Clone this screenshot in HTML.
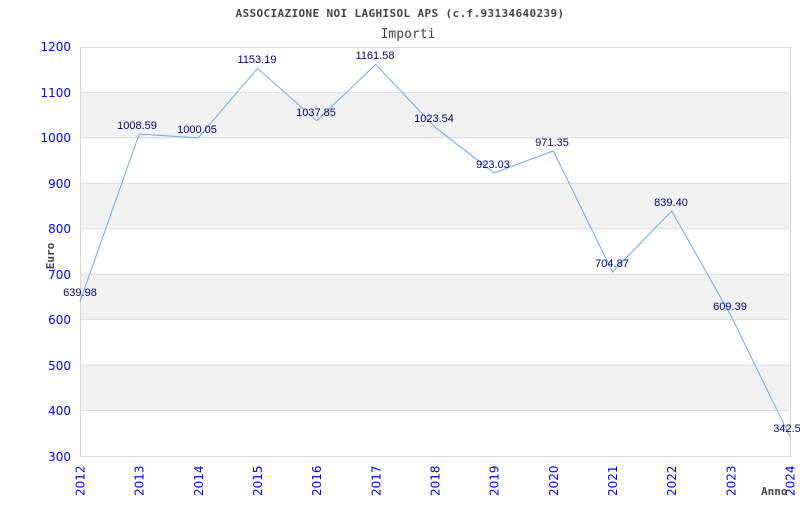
<!DOCTYPE html>
<html><head><style>body{margin:0;background:#fff}</style></head><body>
<svg width="800" height="500" xmlns="http://www.w3.org/2000/svg">
<rect width="800" height="500" fill="#fff"/>
<text x="400" y="17" text-anchor="middle" font-family="DejaVu Sans Mono, monospace" font-weight="bold" font-size="11" letter-spacing="0.38" fill="#444">ASSOCIAZIONE NOI LAGHISOL APS (c.f.93134640239)</text>
<text x="408" y="38" text-anchor="middle" font-family="DejaVu Sans Mono, monospace" font-size="13" fill="#444">Importi</text>
<g fill="#f2f2f2">
<rect x="80" y="92.4" width="710" height="45.4"/>
<rect x="80" y="183.3" width="710" height="45.4"/>
<rect x="80" y="274.2" width="710" height="45.4"/>
<rect x="80" y="365.1" width="710" height="45.4"/>
</g>
<g stroke="#ddd" stroke-width="1">
<line x1="80" y1="92.4" x2="790" y2="92.4"/><line x1="80" y1="137.8" x2="790" y2="137.8"/>
<line x1="80" y1="183.3" x2="790" y2="183.3"/><line x1="80" y1="228.7" x2="790" y2="228.7"/>
<line x1="80" y1="274.2" x2="790" y2="274.2"/><line x1="80" y1="319.6" x2="790" y2="319.6"/>
<line x1="80" y1="365.1" x2="790" y2="365.1"/><line x1="80" y1="410.5" x2="790" y2="410.5"/>
</g>
<rect x="80.5" y="47.5" width="710" height="409" fill="none" stroke="#d8d8d8"/>
<g font-family="DejaVu Sans, sans-serif" font-size="12" fill="#0000ff" text-anchor="end">
<text x="71" y="51">1200</text><text x="71" y="97">1100</text><text x="71" y="142">1000</text>
<text x="71" y="188">900</text><text x="71" y="233">800</text><text x="71" y="279">700</text>
<text x="71" y="324">600</text><text x="71" y="370">500</text><text x="71" y="415">400</text>
<text x="71" y="461">300</text>
</g>
<text transform="translate(54,256) rotate(-90)" text-anchor="middle" font-family="DejaVu Sans Mono, monospace" font-weight="bold" font-size="11" fill="#444">Euro</text>
<g font-family="DejaVu Sans, sans-serif" font-size="12" fill="#0000ff">
<text transform="translate(84.5,496) rotate(-90)">2012</text>
<text transform="translate(143.7,496) rotate(-90)">2013</text>
<text transform="translate(202.8,496) rotate(-90)">2014</text>
<text transform="translate(262,496) rotate(-90)">2015</text>
<text transform="translate(321.2,496) rotate(-90)">2016</text>
<text transform="translate(380.3,496) rotate(-90)">2017</text>
<text transform="translate(439.5,496) rotate(-90)">2018</text>
<text transform="translate(498.7,496) rotate(-90)">2019</text>
<text transform="translate(557.8,496) rotate(-90)">2020</text>
<text transform="translate(617,496) rotate(-90)">2021</text>
<text transform="translate(676.2,496) rotate(-90)">2022</text>
<text transform="translate(735.3,496) rotate(-90)">2023</text>
<text transform="translate(794.5,496) rotate(-90)">2024</text>
</g>
<text x="761" y="495" font-family="DejaVu Sans Mono, monospace" font-weight="bold" font-size="11" fill="#444">Anno</text>
<polyline fill="none" stroke="#6aaaf0" stroke-width="1" points="80,301.5 139.2,134 198.3,137.9 257.5,68.3 316.7,120.7 375.8,64.5 435,127.2 494.2,172.9 553.3,150.9 612.5,272 671.7,210.9 730.8,315.4 790,436.7"/>
<g font-family="Liberation Sans, sans-serif" font-size="11" fill="#000080" text-anchor="middle">
<text x="80" y="296">639.98</text>
<text x="137" y="129">1008.59</text>
<text x="197" y="133">1000.05</text>
<text x="257" y="63">1153.19</text>
<text x="316" y="116">1037.85</text>
<text x="375" y="59">1161.58</text>
<text x="434" y="122">1023.54</text>
<text x="493" y="168">923.03</text>
<text x="552" y="146">971.35</text>
<text x="612" y="267">704.87</text>
<text x="671" y="206">839.40</text>
<text x="730" y="310">609.39</text>
<text x="787" y="432">342.5</text>
</g>
</svg>
</body></html>
